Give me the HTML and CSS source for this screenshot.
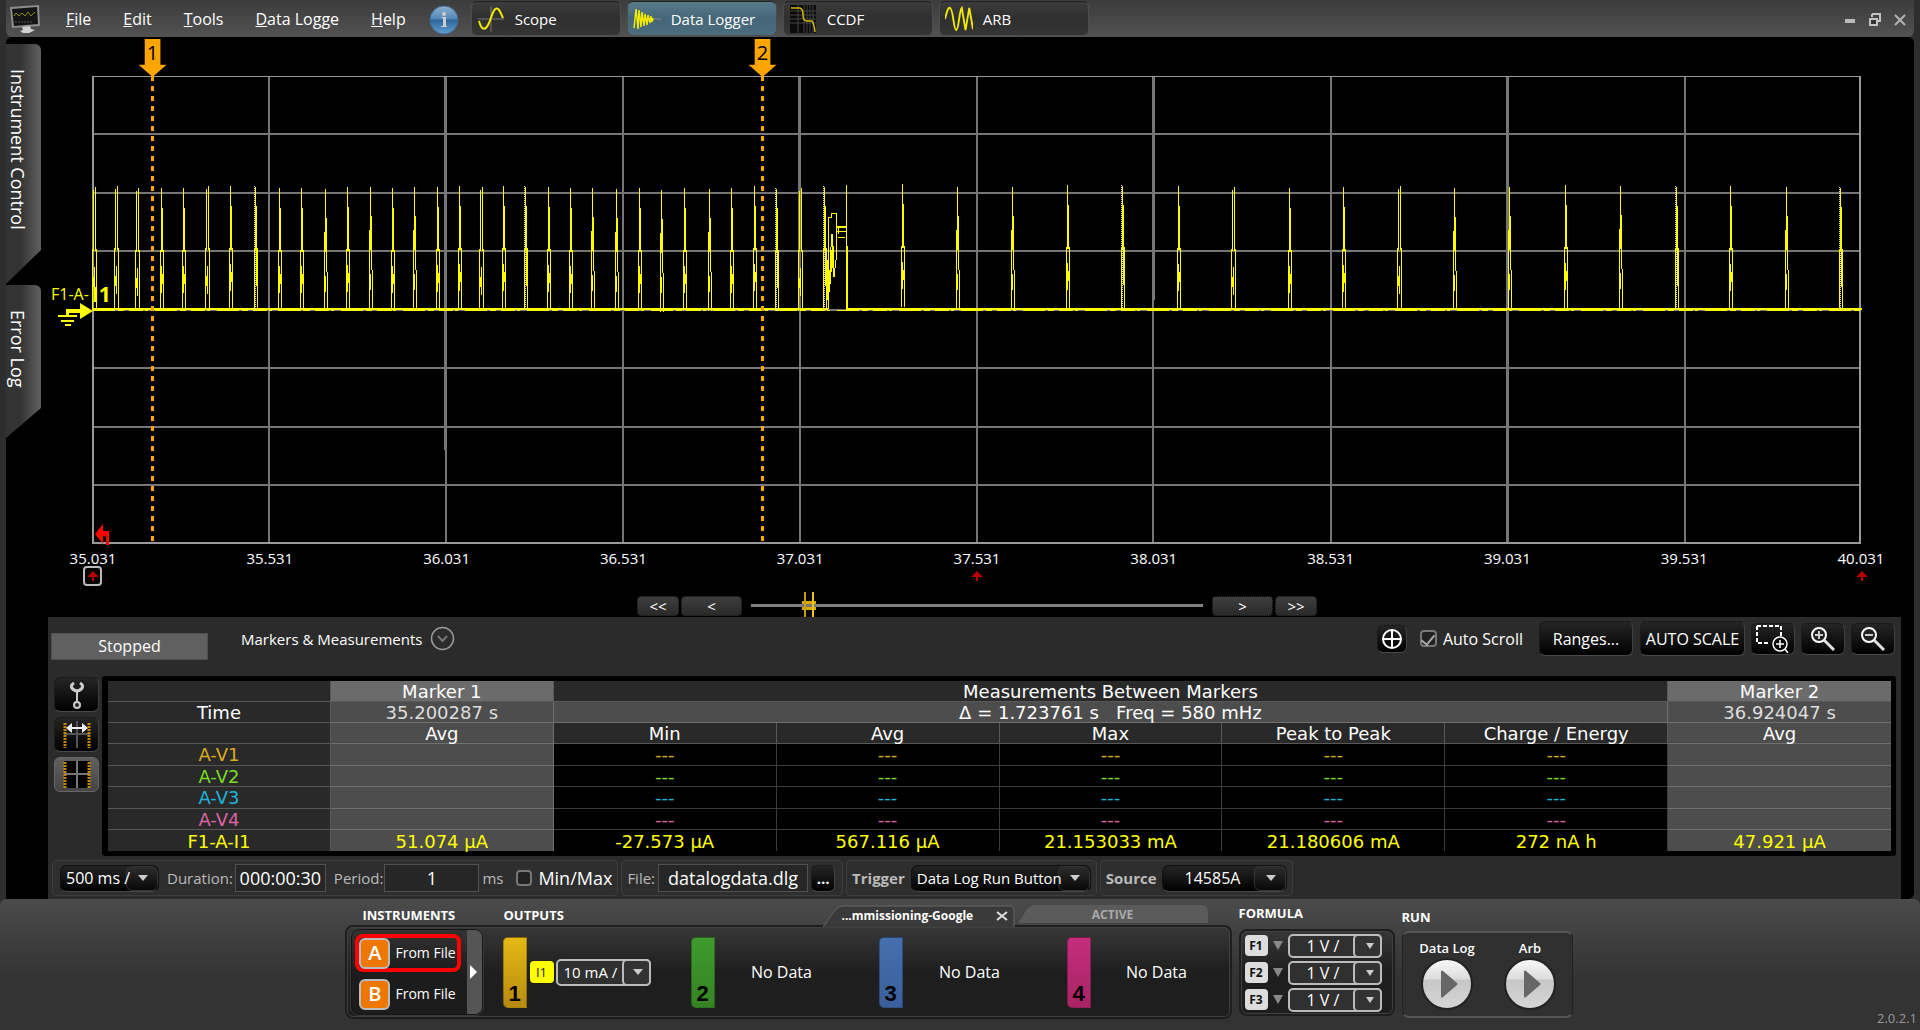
FILE: index.html
```html
<!DOCTYPE html>
<html lang="en">
<head>
<meta charset="utf-8">
<title>Data Logger</title>
<link rel="stylesheet" href="styles.css">
</head>
<body>
<header class="topbar">
  <svg class="app-icon" width="32" height="30" viewBox="0 0 32 30" aria-hidden="true">
    <path d="M1 3L30 1L31 22L3 24Z" fill="#8d8d8d"/><path d="M3 5L28 3L29 20L5 22Z" fill="#141414"/>
    <path d="M5 12l2-3 3 3 3-3 3 3 3-4 3 4 4-4" fill="none" stroke="#8f8a12"/>
    <path d="M6 18h18" stroke="#555" stroke-dasharray="2 1"/>
    <path d="M13 23l8-1 1 3 4 1-6 3h-6l-3-2 3-1z" fill="#d2d2d2"/>
  </svg>
  <nav class="menu">
    <button><u>F</u>ile</button><button><u>E</u>dit</button><button><u>T</u>ools</button><button><u>D</u>ata Logge</button><button><u>H</u>elp</button>
  </nav>
  <button class="info" aria-label="About">
    <svg width="30" height="30" viewBox="0 0 30 30" aria-hidden="true">
      <defs><linearGradient id="ball" x1="0" y1="0" x2="0" y2="1"><stop offset="0" stop-color="#8fb0cf"/><stop offset=".45" stop-color="#5488b8"/><stop offset=".5" stop-color="#2d6499"/><stop offset="1" stop-color="#5fa0d4"/></linearGradient></defs>
      <circle cx="15" cy="15" r="14" fill="url(#ball)" stroke="#3d6d9c"/>
      <circle cx="15" cy="9" r="2" fill="#ccc"/><path d="M12.500 12H17v9h1v1h-6v-1h2v-8h-1.500z" fill="#ccc"/>
    </svg>
  </button>
  <nav class="modes">
    <button class="mode"><svg width="26" height="26" viewBox="0 0 26 26" aria-hidden="true"><path d="M0 13H26M13 0V26" stroke="#777"/><path d="M1 15C4 26 8 24 11 17S16 0 20 3C22 4 23 8 25 12" fill="none" stroke="#f2ea00" stroke-width="2"/></svg>Scope</button>
    <button class="mode is-on"><svg width="28" height="26" viewBox="0 0 28 26" aria-hidden="true"><path d="M20 13h8" stroke="#8a8a8a"/><path d="M1 22L3 3l2 20L6 4l2 17L9 6l2 14L12 8l2 11L15 9l2 8 1-7 1 6 1-4" fill="none" stroke="#f2ea00" stroke-width="1.500"/></svg>Data Logger</button>
    <button class="mode"><svg width="26" height="28" viewBox="0 0 26 28" aria-hidden="true"><rect width="26" height="28" fill="#0b0b0b"/><path d="M0 6H26M0 10H26M0 14H26M0 18H26M8 0V28M14 0V28M17 0V28M20 0V28M23 0V28" stroke="#444"/><path d="M1 3H10Q13 4 13 10T17 16H22Q24 18 25 27" fill="none" stroke="#d8b800" stroke-width="1.500"/></svg>CCDF</button>
    <button class="mode"><svg width="30" height="26" viewBox="0 0 30 26" aria-hidden="true"><path d="M0 13C2 5 3 1 5 1 9 1 9 25 12 25S15 4 18 1L22 25 26 1 30 24" fill="none" stroke="#f2ea00" stroke-width="2"/></svg>ARB</button>
  </nav>
  <div class="window-buttons">
    <button aria-label="Minimize"><svg width="12" height="14" viewBox="0 0 12 14"><path d="M1 6h10v4H1z" fill="#bbb"/></svg></button>
    <button aria-label="Restore"><svg width="12" height="14" viewBox="0 0 12 14"><path d="M3 1h8v7H9M3 4V1" fill="none" stroke="#c4c4c4" stroke-width="2"/><path d="M1 6h7v6H1z" fill="#333" stroke="#c4c4c4" stroke-width="2"/></svg></button>
    <button aria-label="Close"><svg width="12" height="14" viewBox="0 0 12 14"><path d="M1 2l10 10M11 2L1 12" stroke="#b4b4b4" stroke-width="2"/></svg></button>
  </div>
</header>

<main class="workspace">
  <aside class="drawers">
    <button class="drawer drawer-control">Instrument Control</button>
    <button class="drawer drawer-log">Error Log</button>
  </aside>
  <div class="stage">
    <section class="chart" aria-label="Data log trace">
      <div class="plot">
        <svg class="trace" viewBox="93 76 1768 468" preserveAspectRatio="none" aria-hidden="true">
          <defs>
            <path id="pa" d="M0 0V64M1 20V64M-1 62V123M2 62V123M0 78V105M1 86V96" />
            <path id="pb" d="M-1 3V64M1 0V64M-2 62V123M2 62V123M0 80V108M-1 90V100" />
            <path id="pc" d="M0 1V64M1 30V84M-1 44V123M2 84V123M0 88V104" />
            <g id="pd"><path d="M0 1V64M1 20V100M-1 62V123M2 62V123"/><path d="M-1 0V62M0 64V123" stroke="#ddd" stroke-dasharray="1 1"/></g>
          </defs>
          <g class="grid">
            <path d="M93 134H1861M93 193H1861M93 251H1861M93 310H1861M93 368H1861M93 427H1861M93 485H1861"/>
            <path d="M269 76V544M446 76V544M623 76V544M800 76V544M977 76V544M1153 76V544M1331 76V544M1508 76V544M1685 76V544"/>
            <path d="M444.500 76V450M798.500 76V300M1154.500 76V300M1506.500 76V544" class="thin"/>
            <path d="M93 76.500H1861" class="edge-top"/><path d="M93 76V544M1860 76V544M93 543H1861" class="edge"/>
          </g>
          <g class="signal">
            <path d="M93 309H828M846 309H1862" stroke-width="2"/><path d="M93 310.500H1862" stroke-dasharray="22 3 6 5 14 2 3 7"/>
            <g transform="translate(-.5 0)">
            <use href="#pb" x="95" y="187"/><use href="#pb" x="117" y="186"/><use href="#pb" x="138" y="188"/><use href="#pa" x="162" y="188"/><use href="#pa" x="184" y="188"/><use href="#pb" x="208" y="186"/><use href="#pa" x="231" y="186"/><use href="#pd" x="256" y="186"/><use href="#pa" x="280" y="188"/><use href="#pa" x="302" y="188"/><use href="#pc" x="326" y="188"/><use href="#pa" x="348" y="187"/><use href="#pc" x="371" y="186"/><use href="#pa" x="393" y="188"/><use href="#pc" x="415" y="186"/><use href="#pa" x="438" y="187"/><use href="#pa" x="460" y="186"/><use href="#pb" x="482" y="187"/><use href="#pa" x="504" y="186"/><use href="#pd" x="526" y="186"/><use href="#pa" x="549" y="187"/><use href="#pa" x="571" y="188"/><use href="#pc" x="593" y="187"/><use href="#pc" x="617" y="188"/><use href="#pa" x="640" y="188"/><use href="#pc" x="662" y="189"/><use href="#pa" x="685" y="188"/><use href="#pc" x="710" y="188"/><use href="#pa" x="732" y="188"/><use href="#pa" x="755" y="186"/><use href="#pd" x="777" y="188"/><use href="#pb" x="801" y="188"/><use href="#pd" x="825" y="186"/>
            </g>
            <use href="#pa" x="902" y="184"/><use href="#pc" x="957" y="186"/><use href="#pc" x="1012" y="186"/><use href="#pa" x="1067" y="185"/><use href="#pd" x="1122" y="185"/><use href="#pa" x="1178" y="186"/><use href="#pb" x="1233" y="187"/><use href="#pa" x="1289" y="188"/><use href="#pa" x="1343" y="187"/><use href="#pb" x="1399" y="186"/><use href="#pc" x="1454" y="187"/><use href="#pc" x="1509" y="186"/><use href="#pa" x="1565" y="185"/><use href="#pc" x="1620" y="185"/><use href="#pd" x="1676" y="186"/><use href="#pa" x="1730" y="186"/><use href="#pc" x="1786" y="186"/><use href="#pd" x="1840" y="187"/>
            <path d="M846 185V309M847 246V309M828 309V217H831V213H836V226H846M836 231H846M838 237H845M838 227V234M830 284V261L832 234 834 277 836 260 837 227"/>
            <path d="M827 260V300M829 270V292M831 250V272M833 246V268M836 227H846" stroke-width="2"/>
          </g>
        </svg>
        <div class="cursor cursor-1"><span class="flag">1</span></div>
        <div class="cursor cursor-2"><span class="flag">2</span></div>
        <div class="trace-name"><span>F1-A-</span><b>I1</b></div>
        <svg class="ground" width="36" height="24" viewBox="57 303 36 24" aria-hidden="true"><path d="M80 303L93 311 80 319V313H69V315H77V317H58V315H66V309H80ZM61 320h13v2H61zM65 324h6v2h-6z" fill="#ff0"/></svg>
        <svg class="trigger" width="16" height="24" viewBox="0 0 16 24" aria-hidden="true"><path d="M1 10L9 0V7H15V21H12V12H9V20Z" fill="#f00"/></svg>
      </div>
      <div class="axis"><span>35.031</span><span>35.531</span><span>36.031</span><span>36.531</span><span>37.031</span><span>37.531</span><span>38.031</span><span>38.531</span><span>39.031</span><span>39.531</span><span>40.031</span></div>
      <div class="refs">
        <button class="ref is-picked" aria-label="Left reference"><svg width="12" height="10" viewBox="0 0 12 10"><path d="M6 0l6 6H7v4H5V6H0z" fill="#b80000"/></svg></button>
        <button class="ref" aria-label="Center reference"><svg width="12" height="10" viewBox="0 0 12 10"><path d="M6 0l6 6H7v4H5V6H0z" fill="#b80000"/></svg></button>
        <button class="ref" aria-label="Right reference"><svg width="12" height="10" viewBox="0 0 12 10"><path d="M6 0l6 6H7v4H5V6H0z" fill="#b80000"/></svg></button>
      </div>
      <div class="scroller">
        <button class="jump">&lt;&lt;</button><button class="jump wide">&lt;</button>
        <input class="position" type="range" min="0" max="1000" value="116" aria-label="Position">
        <button class="jump wide is-focus">&gt;</button><button class="jump">&gt;&gt;</button>
      </div>
    </section>

    <section class="panel">
      <div class="toolbar">
        <div class="status">Stopped</div>
        <button class="expander">Markers &amp; Measurements
          <svg width="25" height="25" viewBox="0 0 25 25" aria-hidden="true"><circle cx="12.500" cy="12.500" r="11" fill="none" stroke="#999" stroke-width="1.500"/><path d="M8 10l4.500 5L17 10" fill="none" stroke="#777" stroke-width="2"/></svg>
        </button>
        <div class="view-tools">
          <button class="key center-key" aria-label="Center"><svg width="22" height="22" viewBox="0 0 22 22"><circle cx="11" cy="11" r="9" fill="none" stroke="#fff" stroke-width="2"/><path d="M11 3V19M3 11H19" stroke="#fff" stroke-width="2"/></svg></button>
          <label class="tick auto"><input type="checkbox" checked>Auto Scroll</label>
          <button class="key tall ranges">Ranges...</button>
          <button class="key tall autoscale">AUTO SCALE</button>
          <button class="key icon-key" aria-label="Zoom to region"><svg width="34" height="28" viewBox="0 0 34 28"><path d="M1 1H25V12M1 1V18H14" fill="none" stroke="#fff" stroke-width="2" stroke-dasharray="4 2"/><circle cx="24" cy="19" r="7" fill="#0c0c0c" stroke="#fff" stroke-width="1.500"/><path d="M24 15V23M20 19H28M29 24l3 4" stroke="#fff" stroke-width="1.500"/></svg></button>
          <button class="key icon-key" aria-label="Zoom in"><svg width="26" height="26" viewBox="0 0 26 26"><circle cx="9" cy="9" r="7" fill="#222" stroke="#fff" stroke-width="2"/><path d="M9 5V13M5 9H13" stroke="#ccc" stroke-width="2"/><path d="M14 14L24 24" stroke="#ddd" stroke-width="3"/></svg></button>
          <button class="key icon-key" aria-label="Zoom out"><svg width="26" height="26" viewBox="0 0 26 26"><circle cx="9" cy="9" r="7" fill="#222" stroke="#fff" stroke-width="2"/><path d="M5 9H13" stroke="#ccc" stroke-width="2"/><path d="M14 14L24 24" stroke="#ddd" stroke-width="3"/></svg></button>
        </div>
      </div>

      <div class="results">
        <div class="result-keys">
          <button class="key square" aria-label="Settings"><svg width="16" height="28" viewBox="0 0 16 28"><path d="M5 2C0 5 3 9 8 10 13 9 16 5 11 2" fill="none" stroke="#ccc" stroke-width="3"/><path d="M8 10V22" stroke="#ccc" stroke-width="2"/><circle cx="8" cy="24" r="3" fill="#222" stroke="#ccc" stroke-width="2"/></svg></button>
          <button class="key square" aria-label="Markers to screen"><svg width="28" height="28" viewBox="0 0 28 28"><path d="M1 13H27M14 0V27" stroke="#555" stroke-width="2"/><path d="M2 2V27M26 2V27" stroke="#c98600" stroke-width="3" stroke-dasharray="2 1"/><path d="M3 7l6-5v4h4V4 6h2 4V2l6 5-6 5V8H9v4z" fill="#eee"/></svg></button>
          <button class="key square is-lit" aria-label="Show markers"><svg width="28" height="28" viewBox="0 0 28 28"><path d="M1 0H27V27H1z" fill="#000"/><path d="M1 13H27M14 0V27" stroke="#777" stroke-width="2"/><path d="M2 1V27M26 1V27" stroke="#c98600" stroke-width="3" stroke-dasharray="2 1"/></svg></button>
        </div>
        <div class="result-frame">
          <table class="measure">
            <thead>
              <tr><th></th><th class="mark-head">Marker 1</th><th colspan="5">Measurements Between Markers</th><th class="mark-head">Marker 2</th></tr>
              <tr><th>Time</th><td class="mark time">35.200287 s</td><td colspan="5" class="delta">Δ = 1.723761 s &nbsp; Freq = 580 mHz</td><td class="mark time">36.924047 s</td></tr>
              <tr><th></th><th class="mark">Avg</th><th>Min</th><th>Avg</th><th>Max</th><th>Peak to Peak</th><th>Charge / Energy</th><th class="mark">Avg</th></tr>
            </thead>
            <tbody>
              <tr class="v1"><th>A-V1</th><td class="mark"></td><td>---</td><td>---</td><td>---</td><td>---</td><td>---</td><td class="mark"></td></tr>
              <tr class="v2"><th>A-V2</th><td class="mark"></td><td>---</td><td>---</td><td>---</td><td>---</td><td>---</td><td class="mark"></td></tr>
              <tr class="v3"><th>A-V3</th><td class="mark"></td><td>---</td><td>---</td><td>---</td><td>---</td><td>---</td><td class="mark"></td></tr>
              <tr class="v4"><th>A-V4</th><td class="mark"></td><td>---</td><td>---</td><td>---</td><td>---</td><td>---</td><td class="mark"></td></tr>
              <tr class="f1"><th>F1-A-I1</th><td class="mark">51.074 µA</td><td>-27.573 µA</td><td>567.116 µA</td><td>21.153033 mA</td><td>21.180606 mA</td><td>272 nA h</td><td class="mark">47.921 µA</td></tr>
            </tbody>
          </table>
        </div>
      </div>

      <div class="settings">
        <div class="group">
          <span class="pick timebase"><select aria-label="Time per division"><option>500 ms /</option></select></span>
          <label for="duration">Duration:</label><input class="field duration" id="duration" value="000:00:30">
          <label for="period">Period:</label><input class="field period" id="period" value="1"><span class="unit">ms</span>
          <label class="tick minmax"><input type="checkbox">Min/Max</label>
        </div>
        <div class="group">
          <label for="file">File:</label><input class="field file" id="file" value="datalogdata.dlg"><button class="key browse" aria-label="Browse">...</button>
        </div>
        <div class="group">
          <label class="strong" for="trig">Trigger</label><span class="pick trig"><select id="trig"><option>Data Log Run Button</option></select></span>
        </div>
        <div class="group">
          <label class="strong" for="source">Source</label><span class="pick source"><select id="source"><option>14585A</option></select></span>
        </div>
      </div>
    </section>
  </div>
</main>

<footer class="dock">
  <section class="outputs">
    <div class="heads">
      <h2 class="head-instruments">INSTRUMENTS</h2><h2 class="head-outputs">OUTPUTS</h2>
      <div class="tabs">
        <div class="tab is-open"><svg class="tab-shape" width="194" height="22" viewBox="0 0 194 22" aria-hidden="true"><path d="M1 22C8 14 12 1 22 1H188Q192 1 192 6V22" fill="#3a3a3a" stroke="#666"/></svg><span>...mmissioning-Google</span><button aria-label="Close tab"><svg width="12" height="10" viewBox="0 0 12 10"><path d="M1 1l10 8M11 1L1 9" stroke="#ddd" stroke-width="2"/></svg></button></div>
        <div class="tab tab-active"><svg class="tab-shape" width="190" height="18" viewBox="0 0 190 18" aria-hidden="true"><path d="M0 18C7 10 8 0 18 0H184Q190 0 190 7V18Z" fill="#5b5b5b"/></svg><span>ACTIVE</span></div>
      </div>
    </div>
    <div class="box output-box">
      <div class="instruments">
        <div class="sources">
          <button class="unit-row is-picked"><span class="badge">A</span>From File</button>
          <button class="unit-row"><span class="badge">B</span>From File</button>
        </div>
        <button class="expand" aria-label="Show more"><svg width="8" height="14" viewBox="0 0 8 14"><path d="M0 0l7 7-7 7z" fill="#fff"/></svg></button>
      </div>
      <div class="channel c1"><span class="bar">1</span><button class="i1">I1</button><span class="pick light amps"><select aria-label="Output 1 range"><option>10 mA /</option></select></span></div>
      <div class="channel c2"><span class="bar">2</span><span class="none">No Data</span></div>
      <div class="channel c3"><span class="bar">3</span><span class="none">No Data</span></div>
      <div class="channel c4"><span class="bar">4</span><span class="none">No Data</span></div>
    </div>
  </section>
  <section class="formula">
    <h2>FORMULA</h2>
    <div class="box formula-box">
      <div class="formula-row"><button class="fx">F1</button><i class="down"></i><span class="pick light volts"><select aria-label="F1 range"><option>1 V /</option></select></span></div>
      <div class="formula-row"><button class="fx">F2</button><i class="down"></i><span class="pick light volts"><select aria-label="F2 range"><option>1 V /</option></select></span></div>
      <div class="formula-row"><button class="fx">F3</button><i class="down"></i><span class="pick light volts"><select aria-label="F3 range"><option>1 V /</option></select></span></div>
    </div>
  </section>
  <section class="run">
    <h2>RUN</h2>
    <div class="run-box">
      <button class="play">Data Log<svg width="52" height="52" viewBox="0 0 52 52" aria-hidden="true"><defs><linearGradient id="chrome" x1="0" y1="0" x2="0" y2="1"><stop offset="0" stop-color="#fafafa"/><stop offset=".4" stop-color="#dcdcdc"/><stop offset=".42" stop-color="#c6c6c6"/><stop offset="1" stop-color="#d6d6d6"/></linearGradient></defs><circle cx="26" cy="26" r="25" fill="url(#chrome)" stroke="#222" stroke-width="2"/><path d="M20 13Q20 12 22 13L36 25Q37 26 36 27L22 39Q20 40 20 39Z" fill="#666"/></svg></button>
      <button class="play">Arb<svg width="52" height="52" viewBox="0 0 52 52" aria-hidden="true"><circle cx="26" cy="26" r="25" fill="url(#chrome)" stroke="#222" stroke-width="2"/><path d="M20 13Q20 12 22 13L36 25Q37 26 36 27L22 39Q20 40 20 39Z" fill="#666"/></svg></button>
    </div>
  </section>
  <span class="version">2.0.2.1</span>
</footer>
</body>
</html>
```
FILE: styles.css
```css
* { box-sizing: border-box; }
body {
  margin: 0; min-height: 100vh; display: flex; flex-direction: column;
  background: #2e2e2e; color: #fff;
  font: 15px/20px "Open Sans", "Noto Sans", sans-serif;
}
button, input, select { font: inherit; color: inherit; margin: 0; padding: 0; }
button { background: none; border: 0; display: flex; align-items: center; justify-content: center; white-space: nowrap; }
h2 { margin: 0; font: bold 13px/14px "Open Sans", sans-serif; }
svg { display: block; flex: none; }

/* top bar */
.topbar { display: flex; align-items: center; height: 37px; margin: 0 6px; padding-left: 3px; background: linear-gradient(#3c3c3c, #525252); border-radius: 0 0 6px 6px; }
.menu { display: flex; gap: 32px; margin-left: 25px; font-size: 16px; }
.info { margin: 2px 12px 0 23px; }
.modes { display: flex; gap: 6px; }
.mode { width: 150px; height: 35px; justify-content: flex-start; gap: 10px; padding-left: 5px; border: 1px solid #4c4c4c; border-top-color: #222; border-radius: 6px; background: linear-gradient(#3c3c3c, #2f2f2f 50%, #353535); }
.mode svg { width: 28px; }
.mode.is-on { background: linear-gradient(#587b8c, #456677 50%, #4a6d7e); }
.window-buttons { display: flex; gap: 13px; margin-left: auto; padding: 2px 8px 0 0; }

/* work area */
.workspace { display: flex; margin: 0 6px; background: #000; border-radius: 6px 6px 6px 0; }
.drawers { width: 42px; flex: none; padding-top: 7px; }
.drawer { display: flex; width: 35px; align-items: center; justify-content: flex-start; writing-mode: vertical-rl; font-size: 18px; background: linear-gradient(90deg, #333 40%, #606060); border-radius: 0 6px 0 0; padding-right: 12px; }
.drawer-control { height: 240px; padding-top: 25px; clip-path: polygon(0 0, 100% 0, 100% 206px, 0 100%); }
.drawer-log { height: 153px; margin-top: 1px; padding-top: 25px; clip-path: polygon(0 0, 100% 0, 100% 123px, 0 100%); }
.stage { flex: 1; min-width: 0; display: flex; flex-direction: column; }

.chart { padding: 39px 53px 0 45px; }
.plot { position: relative; }
.trace { width: 100%; height: 468px; overflow: visible; shape-rendering: crispEdges; }
.grid path { fill: none; stroke: #767676; stroke-width: 2; }
.grid .thin { stroke-width: 1; }
.grid .edge { stroke: #999; }
.grid .edge-top { stroke: #999; stroke-width: 1; }
.signal { fill: none; stroke: #ff0; stroke-width: 1; }
.cursor { position: absolute; top: 0; width: 3px; height: 465px; background: repeating-linear-gradient(#ffa500 0 5px, transparent 5px 10px); }
.cursor-1 { left: calc(3.37% - 2px); }
.cursor-2 { left: calc(37.87% - 2px); }
.flag { position: absolute; left: -12px; top: -37px; width: 28px; height: 38px; background: #ffa500; clip-path: polygon(22% 0, 78% 0, 78% 68%, 100% 68%, 50% 100%, 0 68%, 22% 68%); color: #000; font-size: 20px; line-height: 28px; text-align: center; }
.trace-name { position: absolute; left: -42px; top: 208px; color: #ff0; display: flex; align-items: center; gap: 3px; line-height: 20px; font-size: 16px; }
.trace-name b { font-size: 21px; }
.ground { position: absolute; left: -36px; top: 227px; }
.trigger { position: absolute; left: 1px; bottom: -4px; }
.axis { display: flex; justify-content: space-between; margin: 4px -30px 0; }
.axis span { width: 60px; text-align: center; }
.refs { display: flex; justify-content: space-between; margin: -2px -10px 0; }
.ref { width: 19px; height: 20px; border-radius: 4px; }
.ref.is-picked { border: 2px solid #bbb; }
.scroller { display: flex; justify-content: center; gap: 2px; margin-top: 10px; height: 21px; }
.jump { width: 42px; height: 20px; border-radius: 4px; border: 1px solid #222; background: linear-gradient(#3e3e3e, #2a2a2a); line-height: 16px; }
.jump.wide { width: 61px; }
.jump.is-focus { border: 1px dotted #000; }
.position { appearance: none; width: 452px; height: 26px; margin: -4px 7px 0; background: linear-gradient(#808080, #808080) center / 100% 3px no-repeat; }
.position::-webkit-slider-thumb { appearance: none; width: 14px; height: 26px; background: linear-gradient(90deg, transparent 2px, #c79a10 2px 4px, transparent 4px 10px, #f0c020 10px 12px, transparent 12px), linear-gradient(#d9a900 0 3px, #777 3px 6px, #d9a900 6px 9px) center / 100% 9px no-repeat; }

/* panel */
.panel { margin: 0 13px 0 0; padding: 4px 0 3px 3px; background: #2b2b2b; min-height: 281px; }
.toolbar { display: flex; height: 55px; align-items: flex-start; font-size: 16px; }
.status { width: 157px; height: 27px; margin-top: 12px; background: #606060; border: 1px solid #505050; line-height: 25px; text-align: center; }
.expander { margin: 5px 0 0 33px; gap: 8px; font-size: 15px; }
.view-tools { display: flex; align-items: center; height: 35px; margin-left: auto; padding-right: 6px; }
.key { border: 1px solid #1b1b1b; border-bottom-color: #484848; border-right-color: #404040; border-radius: 6px; background: linear-gradient(#252525, #000); }
.center-key { width: 30px; height: 28px; }
.tick { display: flex; align-items: center; gap: 6px; }
.tick input { appearance: none; width: 17px; height: 17px; border: 2px solid #777; border-radius: 4px; background: #222; display: grid; place-items: center; }
.tick input:checked::after { content: ""; width: 6px; height: 11px; border: solid #aaa; border-width: 0 2px 2px 0; rotate: 40deg; }
.auto { margin: 0 16px 0 13px; }
.tall { height: 35px; }
.ranges { width: 94px; margin-right: 7px; }
.autoscale { width: 105px; }
.icon-key { width: 44px; height: 32px; margin-left: 6px; }

.results { display: flex; gap: 3px; padding-right: 5px; }
.result-keys { display: flex; flex-direction: column; gap: 5px; padding: 1px 0 0 3px; }
.square { width: 45px; height: 35px; }
.is-lit { background: linear-gradient(#606060, #454545); border-color: #666; }
.result-frame { flex: 1; padding: 5px 5px 5px 6px; background: #000; border-radius: 3px; }
.measure { width: 100%; height: 170px; table-layout: fixed; border-collapse: separate; border-spacing: 0; font: 18px/19px "DejaVu Sans", sans-serif; text-align: center; }
.measure th, .measure td { padding: 1px 0 0; font-weight: normal; border-bottom: 1px solid #585858; border-right: 1px solid #585858; }
.measure th { background: #292929; }
.measure td { background: #000; }
.measure tbody td { border-color: #3c3c3c; }
.measure tr > :last-child { border-right: 0; }
.measure tbody tr:last-child > * { border-bottom: 0; }
.measure .mark, .measure .delta { background: #4d4d4d; border-color: #707070; }
.measure .mark-head { background: #6b6b6b; }
.measure .time { color: #ddd; }
.v1 { color: #d9ac20; } .v2 { color: #7bdc20; } .v3 { color: #20b4dc; } .v4 { color: #dc64a4; } .f1 { color: #ff0; }

.settings { display: flex; gap: 3px; margin-top: 4px; }
.group { display: flex; align-items: center; flex: none; height: 36px; border: 1px solid #3d3d3d; border-radius: 4px; padding: 0 5px; background: #2e2e2e; color: #bbb; }
.group:first-child { margin-left: 1px; padding-left: 7px; }
.pick { position: relative; display: inline-flex; height: 27px; flex: none; color: #fff; font-size: 16px; }
.pick select { appearance: none; width: 100%; padding: 0 30px 0 7px; border: 1px solid #111; border-bottom-color: #484848; border-radius: 7px; background: linear-gradient(#252525, #000); }
.pick::before { content: ""; position: absolute; right: 1px; top: 1px; bottom: 1px; width: 30px; border: 1px solid #333; border-radius: 6px; background: linear-gradient(#2c2c2c, #080808); pointer-events: none; }
.pick::after { content: ""; position: absolute; right: 11px; top: 10px; border: solid transparent; border-width: 6px 5px 0; border-top-color: #ccc; pointer-events: none; }
.timebase, .trig { background: linear-gradient(#252525, #000); border-radius: 7px; }
.timebase select, .trig select { position: relative; z-index: 1; padding: 0 0 0 5px; background: none; }
.timebase { width: 99px; margin-right: 8px; }
.field { height: 28px; border: 1px solid #505050; background: #262626; color: #fff; font-size: 18px; text-align: center; }
.duration { width: 91px; margin: 0 8px 0 2px; }
.period { width: 95px; margin: 0 3px 0 1px; }
.unit { width: 34px; }
.minmax { font-size: 18px; color: #fff; }
.minmax input { width: 16px; height: 16px; }
.file { width: 150px; margin: 0 3px; }
.browse { width: 24px; height: 27px; margin-right: 2px; color: #fff; font-weight: bold; }
.strong { font-weight: bold; }
.trig { width: 180px; margin-left: 6px; font-size: 15px; }
.source { width: 125px; margin-left: 5px; }
.source select { padding-left: 22px; }

/* dock */
.dock { position: relative; flex: 1; display: flex; justify-content: center; align-items: flex-start; gap: 7px; min-height: 131px; padding-right: 3px; background: linear-gradient(#4b4b4b, #333 60%); border-radius: 6px 6px 0 0; }
.box { border: 2px solid #1e1e1e; outline: 1px solid #404040; outline-offset: -3px; border-radius: 8px; background: linear-gradient(#373737, #1e1e1e 50%); }
.outputs { width: 887px; }
.heads { display: flex; height: 26px; padding-left: 18px; align-items: flex-start; }
.head-instruments { width: 141px; margin-top: 9px; }
.head-outputs { flex: 1; margin-top: 9px; }
.tabs { display: flex; align-items: flex-end; gap: 2px; height: 28px; margin-right: 24px; }
.tab { position: relative; display: flex; align-items: center; font: bold 12px/14px "Open Sans", sans-serif; }
.tab > * { position: relative; }
.tab .tab-shape { position: absolute; left: 0; bottom: 0; z-index: 0; }
.tab.is-open { width: 194px; height: 22px; padding: 0 8px 0 20px; justify-content: space-between; }
.tab-active { width: 190px; height: 18px; margin-bottom: 4px; padding-top: 2px; justify-content: center; color: #aaa; }
.output-box { display: flex; height: 94px; align-items: center; padding-left: 4px; }
.instruments { display: flex; flex: none; width: 132px; height: 86px; border: 1px solid #151515; outline: 1px solid #3a3a3a; border-radius: 8px; background: linear-gradient(#333, #1c1c1c 50%); overflow: hidden; margin-right: 20px; }
.sources { flex: 1; display: flex; flex-direction: column; gap: 3px; padding: 4px 0 0 3px; font-size: 14px; }
.unit-row { width: 106px; height: 38px; gap: 5px; border: 4px solid transparent; border-radius: 8px; }
.unit-row.is-picked { border-color: #f00; }
.badge { flex: none; width: 31px; height: 31px; border: 2px solid #bbb; border-radius: 6px; background: #ee7700; font-size: 20px; line-height: 26px; font-weight: 600; }
.expand { width: 15px; background: #555; }
.channel { display: flex; flex: none; align-items: center; width: 188px; font-size: 16px; }
.bar { width: 24px; height: 71px; flex: none; display: flex; align-items: flex-end; justify-content: center; border: 1px solid #0004; border-radius: 5px 0 0 5px; color: #000; font: bold 22px/26px "Liberation Sans", sans-serif; }
.c1 .bar { background: linear-gradient(#e3ba14, #b88a10); }
.c2 .bar { background: linear-gradient(#3f9a2c, #358424); }
.c3 .bar { background: linear-gradient(#456fae, #3b5f9c); }
.c4 .bar { background: linear-gradient(#c52d7c, #a82466); }
.channel.c4 { width: 156px; }
.i1 { width: 24px; height: 22px; margin: 0 2px 0 3px; background: #ff0; color: #222; border-radius: 4px; font-size: 13px; }
.none { width: 134px; text-align: center; }
.light select { background: #303030; border: 2px solid #bbb; border-radius: 5px; padding: 0 22px 0 6px; }
.light::before { width: 25px; right: 0; top: 0; bottom: 0; border: 2px solid #bbb; border-radius: 5px; background: #333; }
.light::after { right: 8px; }
.amps { width: 95px; font-size: 15px; }
.formula { width: 156px; }
.formula h2 { padding-top: 7px; height: 30px; }
.formula-box { height: 87px; display: flex; flex-direction: column; justify-content: center; gap: 3px; padding-left: 4px; }
.formula-row { display: flex; align-items: center; gap: 5px; }
.fx { width: 23px; height: 21px; border-radius: 4px; background: #ddd; color: #111; font: bold 12px/20px "Open Sans", sans-serif; }
.down { border: solid transparent; border-width: 9px 5px 0; border-top-color: #888; }
.volts { width: 94px; height: 24px; font-size: 16px; }
.volts select { padding-left: 17px; line-height: 18px; }
.volts::after { top: 9px; border-width: 6px 4px 0; }
.run { width: 171px; }
.run h2 { padding-top: 11px; height: 32px; }
.run-box { display: flex; gap: 21px; justify-content: center; height: 87px; padding: 5px 0 0 3px; border: 1px solid #222; border-top: 2px solid #555; border-bottom: 2px solid #555; border-radius: 7px; background: #303030; }
.play { width: 62px; height: 73px; gap: 1px; flex-direction: column; font: 600 13px/18px "Open Sans", sans-serif; }
.version { position: absolute; right: 3px; bottom: 2px; color: #999; font-size: 13px; }
```
